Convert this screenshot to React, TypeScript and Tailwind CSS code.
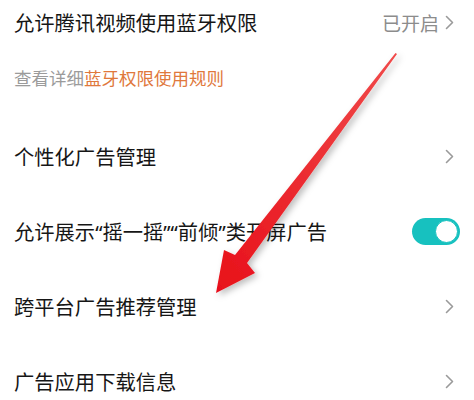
import React from "react";

const Chevron = ({ className = "" }: { className?: string }) => (
  <svg width="9" height="15" viewBox="0 0 9 15" className={className} fill="none">
    <path d="M1.5 1.5 L7.5 7.5 L1.5 13.5" stroke="#9a9a9a" strokeWidth="1.6" strokeLinecap="round" strokeLinejoin="round" />
  </svg>
);

const Row = ({ label, right }: { label: React.ReactNode; right?: React.ReactNode }) => (
  <div className="flex h-[75px] items-center justify-between pl-[14px] pr-[20px]">
    <span className="text-[20.3px] leading-none text-[#161616]">{label}</span>
    {right ?? <Chevron />}
  </div>
);

const Toggle = () => (
  <div className="mr-[-6px] flex h-[27px] w-[48px] items-center justify-end rounded-full bg-[#17c1bf] p-[2px]">
    <div className="h-[23px] w-[23px] rounded-full border border-[#17c1bf] bg-white" />
  </div>
);

// latin quotes are narrow in the screenshot
const Q = ({ c }: { c: string }) => (
  <span style={{ fontFamily: '"Noto Sans", sans-serif' }}>{c}</span>
);

export default function App() {
  return (
    <div
      className="relative h-[400px] w-[474px] overflow-hidden bg-white"
      style={{ fontFamily: '"Noto Sans CJK SC", "Noto Sans", sans-serif' }}
    >
      <div className="flex h-[44px] items-center justify-between pl-[14px] pr-[20px]">
        <span className="text-[20.3px] leading-none text-[#161616]">允许腾讯视频使用蓝牙权限</span>
        <div className="flex items-center gap-[6px]">
          <span className="text-[19px] leading-none text-[#8c8c8c]">已开启</span>
          <Chevron />
        </div>
      </div>
      <div className="flex h-[75px] items-center pb-[7px] pl-[14px]">
        <span className="text-[17.5px] leading-none text-[#9b9b9b]">
          查看详细<span className="text-[#e0783c]">蓝牙权限使用规则</span>
        </span>
      </div>
      <Row label="个性化广告管理" />
      <Row
        label={
          <>
            允许展示<Q c="“" />摇一摇<Q c="”" /><Q c="“" />前倾<Q c="”" />类开屏广告
          </>
        }
        right={<Toggle />}
      />
      <Row label="跨平台广告推荐管理" />
      <Row label="广告应用下载信息" />

      <svg className="pointer-events-none absolute left-0 top-0" width="474" height="400">
        <defs>
          <filter id="sh" x="-20%" y="-20%" width="140%" height="140%">
            <feDropShadow dx="3" dy="3" stdDeviation="3" floodColor="#000" floodOpacity="0.25" />
          </filter>
          <linearGradient id="rg" x1="1" y1="0" x2="0" y2="1">
            <stop offset="0" stopColor="#f04a4a" />
            <stop offset="1" stopColor="#e8101a" />
          </linearGradient>
        </defs>
        <polygon
          filter="url(#sh)"
          fill="url(#rg)"
          points="216,293 255,273 247,263 397,54 395.5,53 235,255 224,250"
        />
      </svg>
    </div>
  );
}
